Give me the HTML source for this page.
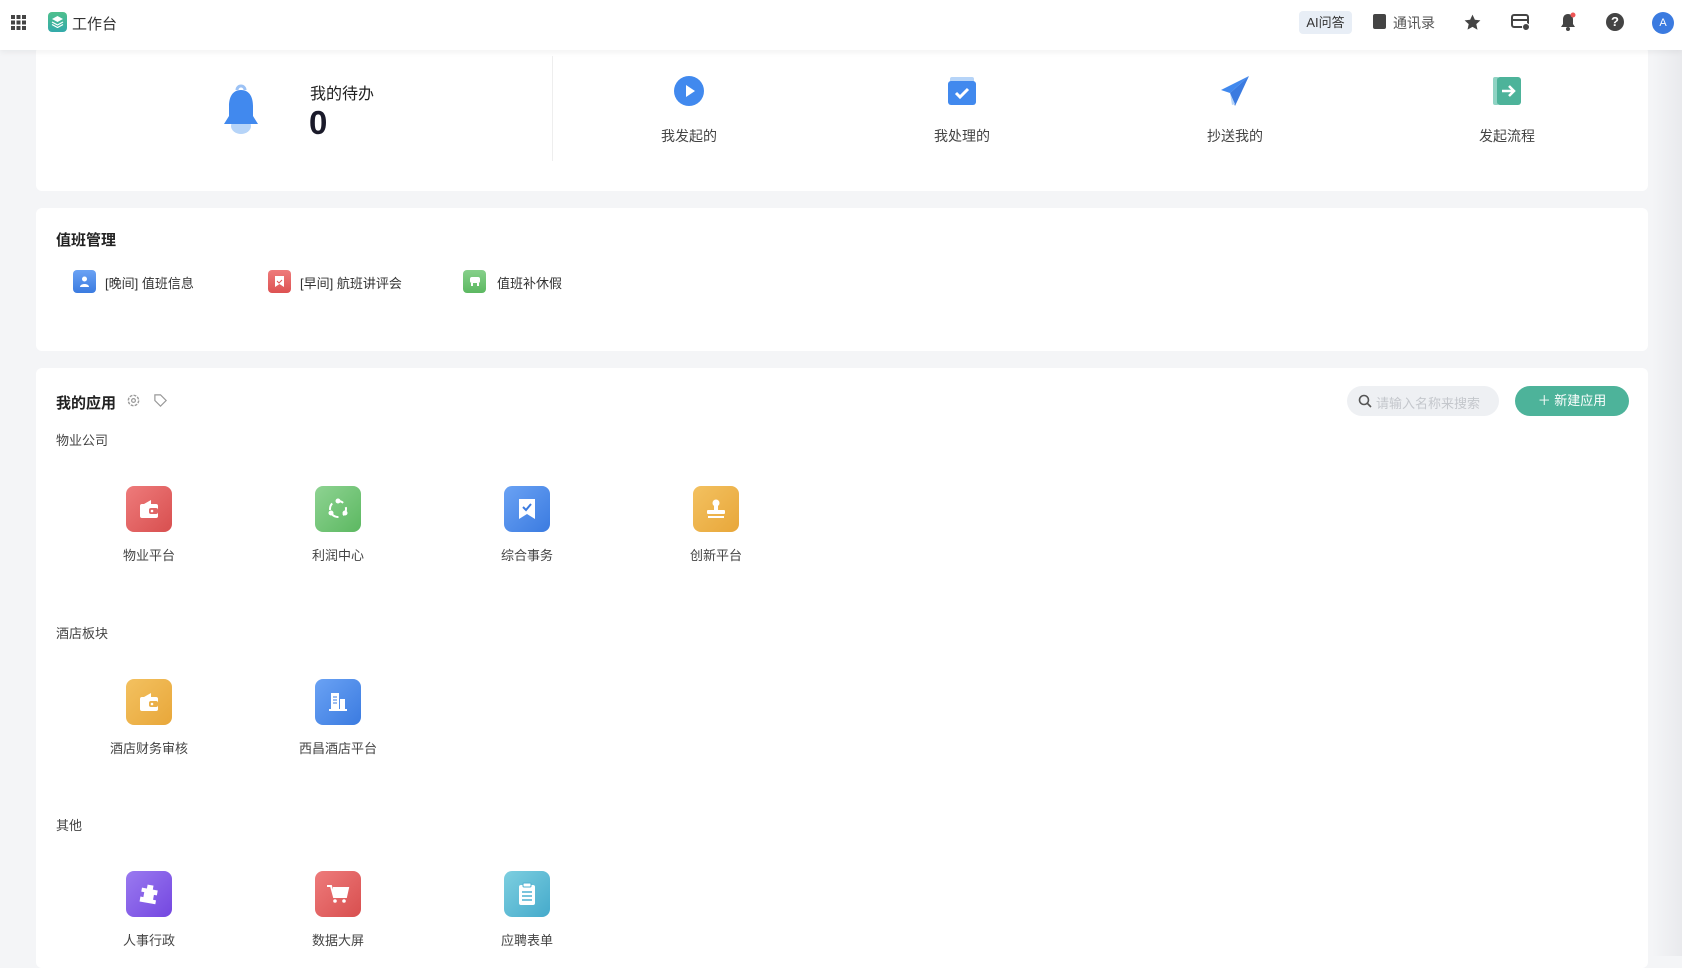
<!DOCTYPE html><html><head><meta charset="utf-8"><style>
*{margin:0;padding:0;box-sizing:border-box}
body{width:1682px;height:956px;overflow:hidden;background:#f4f5f7;font-family:"Liberation Sans","Noto Sans CJK SC",sans-serif;color:#333;position:relative}
.a{position:absolute}
.hdr{left:0;top:0;width:1682px;height:50px;background:#fff;box-shadow:0 2px 6px rgba(0,0,0,.06);z-index:2}
.card{background:#fff;border-radius:6px}
.t{font-size:14px;color:#333;white-space:nowrap}
.lbl{font-size:13px;color:#444;text-align:center;width:120px;white-space:nowrap}
.ico{width:46px;height:46px;border-radius:8px;display:flex;align-items:center;justify-content:center}
.sm{width:23px;height:23px;border-radius:4px;display:flex;align-items:center;justify-content:center}
</style></head><body>
<div class="a hdr">
 <svg class="a" style="left:11px;top:15px" width="15" height="15"><g fill="#444"><rect x="0" y="0" width="4" height="4"/><rect x="5.5" y="0" width="4" height="4"/><rect x="11" y="0" width="4" height="4"/><rect x="0" y="5.5" width="4" height="4"/><rect x="5.5" y="5.5" width="4" height="4"/><rect x="11" y="5.5" width="4" height="4"/><rect x="0" y="11" width="4" height="4"/><rect x="5.5" y="11" width="4" height="4"/><rect x="11" y="11" width="4" height="4"/></g></svg>
 <div class="a" style="left:48px;top:12px;width:19px;height:20px;border-radius:4px;background:linear-gradient(#4fc08d,#3aa);"></div>
 <svg class="a" style="left:51px;top:15px" width="13" height="13"><path d="M6.5 1L12 4 6.5 7 1 4z" fill="#fff"/><path d="M1 7l5.5 3 5.5-3M1 9.5l5.5 3 5.5-3" stroke="#fff" fill="none" stroke-width="1.2"/></svg>
 <div class="a" style="left:72px;top:13px;font-size:15px;color:#333">工作台</div>
 <div class="a" style="left:1299px;top:11px;width:53px;height:23px;border-radius:4px;background:#e8eef6;font-size:13px;color:#333;text-align:center;line-height:23px">AI问答</div>
 <div class="a" style="left:1373px;top:14px;width:13px;height:15px;border-radius:2px;background:#444"></div>
 <div class="a" style="left:1393px;top:13px;font-size:14px;color:#555">通讯录</div>
 <svg class="a" style="left:1463px;top:13px" width="19" height="19" viewBox="0 0 24 24"><path d="M12 2l3 6.5 7 .8-5.2 4.8 1.5 7L12 17.6 5.7 21l1.5-7L2 9.3l7-.8z" fill="#444"/></svg>
 <svg class="a" style="left:1511px;top:14px" width="19" height="17" viewBox="0 0 19 17"><rect x="1" y="1" width="16" height="12" rx="2" fill="none" stroke="#444" stroke-width="2"/><rect x="1" y="5" width="16" height="2" fill="#444"/><circle cx="15" cy="13" r="3.5" fill="#444" stroke="#fff" stroke-width="1"/></svg>
 <svg class="a" style="left:1559px;top:12px" width="18" height="20" viewBox="0 0 18 20"><path d="M9 2c-3.5 0-5 2.5-5 5.5V12L2 15h14l-2-3V7.5C14 4.5 12.5 2 9 2z" fill="#444"/><circle cx="9" cy="17" r="2" fill="#444"/><circle cx="14" cy="3" r="2.5" fill="#e55"/></svg>
 <div class="a" style="left:1606px;top:13px;width:18px;height:18px;border-radius:50%;background:#444;color:#fff;font-size:13px;font-weight:bold;text-align:center;line-height:18px">?</div>
 <div class="a" style="left:1652px;top:12px;width:22px;height:22px;border-radius:50%;background:#3b7be0;color:#fff;font-size:11px;text-align:center;line-height:22px">A</div>
</div>

<div class="a card" style="left:36px;top:46px;width:1612px;height:145px"></div>
<svg class="a" style="left:218px;top:82px" width="46" height="54" viewBox="0 0 46 54"><path d="M19 8a4 4 0 0 1 8 0" fill="none" stroke="#9cc2f5" stroke-width="3"/><ellipse cx="23" cy="44" rx="10" ry="8" fill="#b6d4f8"/><path d="M23 8c-9 0-12 8-12 16v10l-5 8h34l-5-8V24c0-8-3-16-12-16z" fill="#4189ee"/></svg>
<div class="a" style="left:310px;top:80px;font-size:16px;color:#222">我的待办</div>
<div class="a" style="left:309px;top:104px;font-size:33px;font-weight:bold;color:#1a1a2a">0</div>
<div class="a" style="left:552px;top:56px;width:1px;height:105px;background:#eee"></div>

<svg class="a" style="left:673px;top:75px" width="32" height="32"><circle cx="16" cy="16" r="15" fill="#4189ee"/><path d="M13 10l9 6-9 6z" fill="#fff"/></svg>
<div class="a lbl" style="left:629px;top:126px;font-size:14px">我发起的</div>
<svg class="a" style="left:946px;top:75px" width="32" height="32"><rect x="4" y="2" width="24" height="8" rx="2" fill="#b6d4f8"/><rect x="2" y="6" width="28" height="24" rx="3" fill="#4189ee"/><path d="M10 18l4 4 8-8" stroke="#fff" stroke-width="3" fill="none"/></svg>
<div class="a lbl" style="left:902px;top:126px;font-size:14px">我处理的</div>
<svg class="a" style="left:1219px;top:74px" width="32" height="34"><path d="M30 2L2 16l9 3z" fill="#4189ee"/><path d="M30 2L11 19l5 13z" fill="#3b7be0"/><path d="M11 19l2 12 3-1z" fill="#b6d4f8"/></svg>
<div class="a lbl" style="left:1175px;top:126px;font-size:14px">抄送我的</div>
<svg class="a" style="left:1492px;top:76px" width="30" height="30"><rect x="1" y="1" width="6" height="28" rx="2" fill="#8fd3c3"/><rect x="5" y="1" width="24" height="28" rx="3" fill="#4db39a"/><path d="M10 15h12M17 10l5 5-5 5" stroke="#fff" stroke-width="2.5" fill="none"/></svg>
<div class="a lbl" style="left:1447px;top:126px;font-size:14px">发起流程</div>

<div class="a card" style="left:36px;top:208px;width:1612px;height:143px"></div>
<div class="a" style="left:56px;top:229px;font-size:15px;font-weight:bold;color:#222">值班管理</div>
<div class="a sm" style="left:73px;top:270px;background:linear-gradient(#6aa2f4,#3b7be0)"><svg width="11" height="11"><circle cx="5.5" cy="3" r="2.5" fill="#fff"/><path d="M1 11c0-4 9-4 9 0z" fill="#fff"/></svg></div>
<div class="a t" style="left:105px;top:273px;font-size:13px">[晚间] 值班信息</div>
<div class="a sm" style="left:268px;top:270px;background:linear-gradient(#ee7b7b,#dd5252)"><svg width="11" height="13"><path d="M1 1h9v11l-4.5-3L1 12z" fill="#fff"/><path d="M3 6l2 2 3-3" stroke="#dd5252" fill="none"/></svg></div>
<div class="a t" style="left:300px;top:273px;font-size:13px">[早间] 航班讲评会</div>
<div class="a sm" style="left:463px;top:270px;background:linear-gradient(#86d08a,#5cb861)"><svg width="12" height="11"><rect x="1" y="1" width="10" height="6" rx="2" fill="#fff"/><rect x="2" y="7" width="2" height="3" fill="#fff"/><rect x="8" y="7" width="2" height="3" fill="#fff"/></svg></div>
<div class="a t" style="left:497px;top:273px;font-size:13px">值班补休假</div>

<div class="a card" style="left:36px;top:368px;width:1612px;height:600px"></div>
<div class="a" style="left:56px;top:392px;font-size:15px;font-weight:bold;color:#222">我的应用</div>
<svg class="a" style="left:126px;top:393px" width="15" height="15" viewBox="0 0 16 16"><circle cx="8" cy="8" r="5.5" fill="none" stroke="#999" stroke-width="1.5" stroke-dasharray="3 1.3"/><circle cx="8" cy="8" r="2" fill="none" stroke="#999" stroke-width="1.3"/></svg>
<svg class="a" style="left:153px;top:393px" width="15" height="15" viewBox="0 0 16 16"><path d="M2 2h6l6 6-6 6-6-6z" fill="none" stroke="#999" stroke-width="1.3"/></svg>
<div class="a" style="left:1347px;top:386px;width:152px;height:30px;border-radius:15px;background:#eef0f3"></div>
<svg class="a" style="left:1358px;top:394px" width="14" height="14"><circle cx="6" cy="6" r="4.5" fill="none" stroke="#555" stroke-width="1.6"/><path d="M9.5 9.5l3.5 3.5" stroke="#555" stroke-width="1.6"/></svg>
<div class="a" style="left:1376px;top:393px;font-size:13px;color:#c4c7cc">请输入名称来搜索</div>
<div class="a" style="left:1515px;top:386px;width:114px;height:30px;border-radius:15px;background:#4db39a;color:#fff;font-size:13px;text-align:center;line-height:30px">＋ 新建应用</div>

<div class="a" style="left:56px;top:430px;font-size:13px;color:#444">物业公司</div>
<div class="a" style="left:56px;top:623px;font-size:13px;color:#444">酒店板块</div>
<div class="a" style="left:56px;top:815px;font-size:13px;color:#444">其他</div>

<!-- row1 -->
<div class="a ico" style="left:126px;top:486px;background:linear-gradient(135deg,#ee7b7b,#d84f4f)"><svg width="22" height="20"><path d="M6 5l7-4v4z" fill="#fff"/><rect x="2" y="5" width="18" height="14" rx="2" fill="#fff"/><rect x="11" y="9" width="9" height="6" rx="2" fill="#e06565"/><circle cx="14" cy="12" r="1.3" fill="#fff"/></svg></div>
<div class="a lbl" style="left:89px;top:545px">物业平台</div>
<div class="a ico" style="left:315px;top:486px;background:linear-gradient(135deg,#8ed392,#5cb861)"><svg width="24" height="24"><circle cx="12" cy="12" r="8" fill="none" stroke="#fff" stroke-width="2" stroke-dasharray="7 5"/><circle cx="12" cy="4" r="2.5" fill="#fff"/><circle cx="5" cy="16" r="2.5" fill="#fff"/><circle cx="19" cy="16" r="2.5" fill="#fff"/></svg></div>
<div class="a lbl" style="left:278px;top:545px">利润中心</div>
<div class="a ico" style="left:504px;top:486px;background:linear-gradient(135deg,#6aa2f4,#3b7be0)"><svg width="20" height="24"><path d="M2 2h16v20l-8-5-8 5z" fill="#fff"/><path d="M6 10l3 3 5-6" stroke="#3b7be0" stroke-width="2" fill="none"/></svg></div>
<div class="a lbl" style="left:467px;top:545px">综合事务</div>
<div class="a ico" style="left:693px;top:486px;background:linear-gradient(135deg,#f3c160,#e8a73a)"><svg width="22" height="22"><circle cx="11" cy="5" r="3.5" fill="#fff"/><rect x="9" y="7" width="4" height="5" fill="#fff"/><rect x="2" y="12" width="18" height="4" rx="1" fill="#fff"/><rect x="3" y="18" width="16" height="2" fill="#fff"/></svg></div>
<div class="a lbl" style="left:656px;top:545px">创新平台</div>
<!-- row2 -->
<div class="a ico" style="left:126px;top:679px;background:linear-gradient(135deg,#f3c160,#e8a73a)"><svg width="22" height="20"><path d="M6 5l7-4v4z" fill="#fff"/><rect x="2" y="5" width="18" height="14" rx="2" fill="#fff"/><rect x="11" y="9" width="9" height="6" rx="2" fill="#eab04a"/><circle cx="14" cy="12" r="1.3" fill="#fff"/></svg></div>
<div class="a lbl" style="left:89px;top:738px">酒店财务审核</div>
<div class="a ico" style="left:315px;top:679px;background:linear-gradient(135deg,#6aa2f4,#3b7be0)"><svg width="22" height="22"><rect x="4" y="2" width="8" height="17" fill="#fff"/><rect x="13" y="8" width="5" height="11" fill="#fff"/><rect x="2" y="18" width="18" height="2" fill="#fff"/><path d="M6 6h4M6 9h4M6 12h4" stroke="#3b7be0"/></svg></div>
<div class="a lbl" style="left:278px;top:738px">西昌酒店平台</div>
<!-- row3 -->
<div class="a ico" style="left:126px;top:871px;background:linear-gradient(135deg,#9a7af0,#7447e0)"><svg width="22" height="22"><path d="M8 2h6v4h5v5h-3v5h3v4H3v-5h3v-5H3V6h5z" fill="#fff" transform="rotate(10 11 11)"/></svg></div>
<div class="a lbl" style="left:89px;top:930px">人事行政</div>
<div class="a ico" style="left:315px;top:871px;background:linear-gradient(135deg,#ee7b7b,#d84f4f)"><svg width="24" height="22"><path d="M1 3h4l3 11h12l2-9H7" fill="none" stroke="#fff" stroke-width="2"/><rect x="7" y="6" width="14" height="7" fill="#fff"/><circle cx="9" cy="18" r="1.8" fill="#fff"/><circle cx="18" cy="18" r="1.8" fill="#fff"/></svg></div>
<div class="a lbl" style="left:278px;top:930px">数据大屏</div>
<div class="a ico" style="left:504px;top:871px;background:linear-gradient(135deg,#7dcfe0,#45aacb)"><svg width="20" height="24"><rect x="2" y="3" width="16" height="20" rx="2" fill="#fff"/><rect x="6" y="1" width="8" height="4" rx="1" fill="#fff" stroke="#4fb0d0"/><path d="M5 10h10M5 14h10M5 18h10" stroke="#4fb0d0" stroke-width="1.5"/></svg></div>
<div class="a lbl" style="left:467px;top:930px">应聘表单</div>

<div class="a" style="left:1652px;top:50px;width:30px;height:906px;background:linear-gradient(90deg,#f4f5f7,#e9eaed)"></div>
</body></html>
